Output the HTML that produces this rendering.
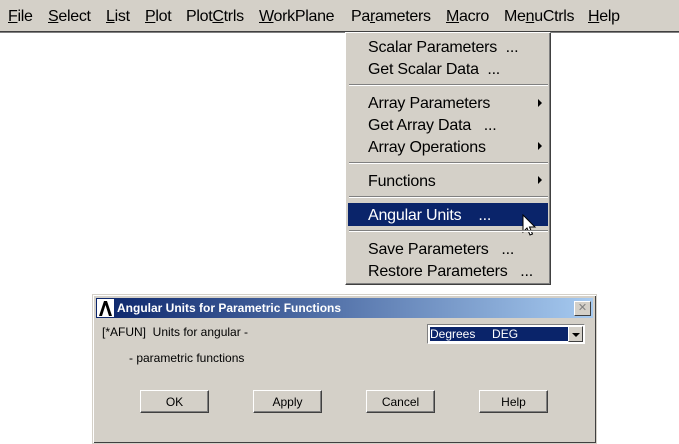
<!DOCTYPE html>
<html><head><style>
body{margin:0;width:679px;height:444px;background:#fff;position:relative;overflow:hidden;font-family:"Liberation Sans",Arial,sans-serif;}
.bar{position:absolute;left:0;top:0;width:679px;height:31px;background:#d4d0c8;border-bottom:1px solid #404040;box-shadow:0 1px 0 #808080;}
.bar span{position:absolute;top:8px;font-size:16px;color:#000;letter-spacing:-0.3px;}
u{text-decoration:underline;}
.menu{position:absolute;left:345px;top:32px;width:204px;height:251px;background:#d4d0c8;border-left:1px solid #fff;border-top:1px solid #fff;border-right:1px solid #404040;border-bottom:1px solid #404040;box-shadow:inset -1px -1px 0 #808080;}
.mi{position:absolute;left:22px;font-size:16px;color:#000;letter-spacing:-0.2px;white-space:pre;}
.sep{position:absolute;left:3px;width:199px;height:0;border-top:1px solid #808080;border-bottom:1px solid #fff;}
.arr{position:absolute;left:192px;width:0;height:0;border-left:4px solid #000;border-top:4px solid transparent;border-bottom:4px solid transparent;}
.hl{position:absolute;left:2px;top:170px;width:200px;height:23px;background:#0a246a;}
.dlg{position:absolute;left:92px;top:294px;width:503px;height:148px;background:#d4d0c8;border:1px solid #d4d0c8;box-shadow:inset 1px 1px 0 #fff,inset -1px -1px 0 #404040;}
.title{position:absolute;left:3px;top:3px;width:497px;height:20px;background:linear-gradient(to right,#0a246a,#a6caf0);}
.title b{position:absolute;left:21px;top:3px;color:#fff;font-size:12px;}
.t{position:absolute;font-size:12px;color:#000;white-space:pre;}
.btn{position:absolute;top:95px;width:69px;height:23px;background:#d4d0c8;border:1px solid;border-color:#fff #404040 #404040 #fff;box-shadow:inset -1px -1px 0 #808080;font-size:12px;text-align:center;line-height:23px;box-sizing:border-box;}
</style></head><body>
<div class="bar">
<span style="left:8px"><u>F</u>ile</span>
<span style="left:48px"><u>S</u>elect</span>
<span style="left:106px"><u>L</u>ist</span>
<span style="left:145px"><u>P</u>lot</span>
<span style="left:186px">Plot<u>C</u>trls</span>
<span style="left:259px"><u>W</u>orkPlane</span>
<span style="left:351px">Pa<u>r</u>ameters</span>
<span style="left:446px"><u>M</u>acro</span>
<span style="left:504px">Me<u>n</u>uCtrls</span>
<span style="left:588px"><u>H</u>elp</span>
</div>
<div class="menu">
<div class="mi" style="top:6px">Scalar Parameters  ...</div>
<div class="mi" style="top:28px">Get Scalar Data  ...</div>
<div class="sep" style="top:51px"></div>
<div class="mi" style="top:62px">Array Parameters</div><div class="arr" style="top:66px"></div>
<div class="mi" style="top:84px">Get Array Data   ...</div>
<div class="mi" style="top:106px">Array Operations</div><div class="arr" style="top:109px"></div>
<div class="sep" style="top:129px"></div>
<div class="mi" style="top:140px">Functions</div><div class="arr" style="top:143px"></div>
<div class="sep" style="top:163px"></div>
<div class="hl"></div>
<div class="mi" style="top:174px;color:#fff">Angular Units    ...</div>
<svg style="position:absolute;left:176px;top:181px" width="16" height="24" viewBox="0 0 16 24"><path d="M1 1 L1 18 L5 14 L8 21 L10.5 20 L7.5 13 L13 13 Z" fill="#fff" stroke="#000" stroke-width="1"/></svg>
<div class="sep" style="top:197px"></div>
<div class="mi" style="top:208px">Save Parameters   ...</div>
<div class="mi" style="top:230px">Restore Parameters   ...</div>
</div>
<div class="dlg">
<div class="title">
<svg style="position:absolute;left:1px;top:1px" width="17" height="18" viewBox="0 0 17 18"><rect width="17" height="18" fill="#fff"/><path d="M2 17 L7 2 L10 2 L15 17 L12 17 L8.5 6 L5 17Z" fill="#000"/></svg>
<b>Angular Units for Parametric Functions</b>
<div style="position:absolute;left:478px;top:3px;width:15px;height:13px;background:#d4d0c8;border:1px solid;border-color:#fff #404040 #404040 #fff;font-size:11px;line-height:12px;text-align:center;color:#808080">✕</div>
</div>
<div class="t" style="left:9px;top:30px">[*AFUN]  Units for angular -</div>
<div class="t" style="left:36px;top:56px">- parametric functions</div>
<div style="position:absolute;left:334px;top:29px;width:158px;height:20px;background:#fff;border:1px solid;border-color:#808080 #fff #fff #808080;box-sizing:border-box">
<div style="position:absolute;left:2px;top:2px;width:138px;height:14px;background:#0a246a;color:#fff;font-size:12px;line-height:14px;white-space:pre;outline:1px dotted #fff">Degrees     DEG</div>
<div style="position:absolute;right:1px;top:1px;width:15px;height:16px;background:#d4d0c8;box-sizing:border-box;border:1px solid;border-color:#fff #404040 #404040 #fff"><div style="position:absolute;left:3px;top:6px;border-top:4px solid #000;border-left:4px solid transparent;border-right:4px solid transparent"></div></div>
</div>
<div class="btn" style="left:47px">OK</div>
<div class="btn" style="left:160px">Apply</div>
<div class="btn" style="left:273px">Cancel</div>
<div class="btn" style="left:386px">Help</div>
</div>
</body></html>
